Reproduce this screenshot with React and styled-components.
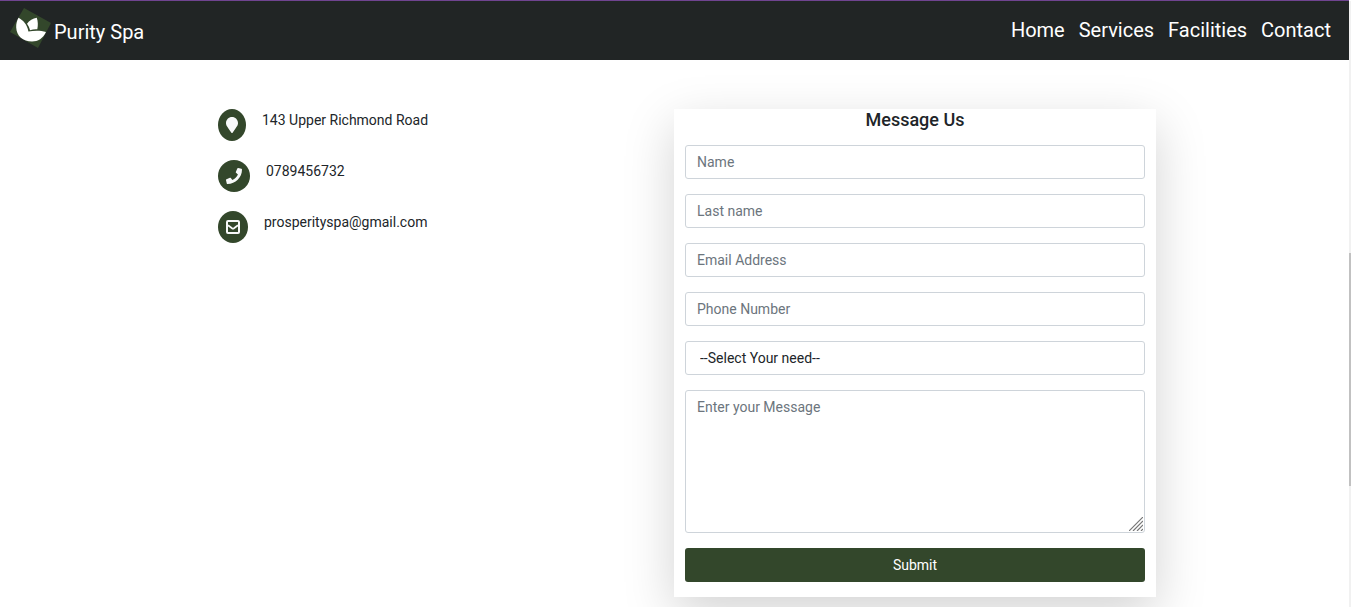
import React from "react";
import styled, { createGlobalStyle } from "styled-components";
import { FaMapMarker, FaPhone } from "react-icons/fa";

const GlobalStyle = createGlobalStyle`
  *, *::before, *::after { box-sizing: border-box; }
  body {
    margin: 0;
    background: #fff;
    color: #212529;
    font-family: Roboto, "Liberation Sans", sans-serif;
    font-size: 14px;
    line-height: 22px;
  }
`;

const Page = styled.div`
  min-height: 100vh;
  padding-right: 2px;
`;

const Navbar = styled.header`
  display: flex;
  align-items: center;
  justify-content: space-between;
  height: 60px;
  padding: 0 18px 0 10px;
  border-top: 1px solid #6f4490;
  background: #212525;
`;

const Brand = styled.a`
  display: flex;
  align-items: center;
  gap: 2px;
  color: #fff;
  font-size: 20px;
  line-height: 30px;
  text-decoration: none;

  svg { margin-bottom: 6px; }
  span { padding-top: 2px; }
`;

const NavLinks = styled.nav`
  display: flex;
  gap: 14px;
  padding-bottom: 2px;
`;

const NavLink = styled.a`
  color: #fff;
  font-size: 20px;
  line-height: 30px;
  text-decoration: none;
`;

const Main = styled.main`
  display: grid;
  grid-template-columns: 1fr 1fr;
  align-items: start;
  width: calc(100% - 32px);
  max-width: 965px;
  margin: 0 auto;
  padding: 49px 1px 9px 0;
`;

const ContactList = styled.address`
  display: flex;
  flex-direction: column;
  gap: 19px;
  padding-left: 26px;
  font-style: normal;
`;

const ContactRow = styled.div`
  display: flex;
  gap: 16px;
  font-size: 14px;
  line-height: 22px;
`;

const ContactIcon = styled.span`
  display: flex;
  align-items: center;
  justify-content: center;
  width: ${(p) => p.$width}px;
  height: 32px;
  border-radius: 50%;
  background: #33472b;
  color: #f8f9fa;
`;

const Card = styled.form`
  display: flex;
  flex-direction: column;
  gap: 15px;
  padding: 0 11px 15px;
  background: #fff;
  box-shadow: 0 16px 48px rgba(0, 0, 0, 0.175);
`;

const Title = styled.h1`
  margin: 0;
  font-size: 18px;
  font-weight: 500;
  line-height: 21px;
  text-align: center;
`;

const Field = styled.input`
  display: block;
  width: 100%;
  height: 34px;
  padding: 5px 11px;
  border: 1px solid #ced4da;
  border-radius: 3px;
  background: #fff;
  color: #212529;
  font: inherit;

  &::placeholder { color: #6c757d; opacity: 1; }
`;

const SelectField = styled(Field)`
  appearance: none;
  padding-left: 14px;
`;

const MessageBox = styled.div`
  position: relative;
`;

const MessageField = styled(Field)`
  height: 143px;
  resize: none;
`;

const Grip = styled.svg`
  position: absolute;
  right: 2px;
  bottom: 2px;
`;

const SubmitButton = styled.button`
  height: 34px;
  border: 0;
  border-radius: 3px;
  background: #33472b;
  color: #fff;
  font: inherit;
  cursor: pointer;
`;

const ScrollTrack = styled.div`
  position: fixed;
  top: 1px;
  right: 0;
  bottom: 0;
  width: 2px;
  background: #f1f1f1;
`;

const ScrollThumb = styled.div`
  height: 38.5%;
  margin-top: 252px;
  background: #c1c1c1;
`;

const Logo = () => (
  <svg width="42" height="40" viewBox="0 0 42 40" aria-hidden="true">
    <path d="M14 0 41 15 28 40 0 24Z" fill="#33472b" />
    <path
      d="M8.5 9.8C13 12 17.5 17 18.4 23.5C24 22.6 30.5 22.3 36 24C33 30.5 28 33.5 22 33.5C13 33.5 6.5 28 6.2 19.5C6.1 16 6.8 12.7 8.5 9.8Z"
      fill="#fff"
    />
    <path
      d="M26.8 9.8C23 10.3 19.2 12.5 17 15.7C18.6 18 19.6 20.2 20 22.2C22.5 21.3 25 21 27.3 21.2C28.2 17.5 28 13.5 26.8 9.8Z"
      fill="#fff"
    />
  </svg>
);

const MailIcon = () => (
  <svg width="14" height="14" viewBox="0 0 14 14" fill="none" stroke="currentColor" aria-hidden="true">
    <rect x="1" y="1" width="12" height="12" rx="1" strokeWidth="2" />
    <path d="M2 5.2 6 8.2Q7 8.9 8 8.2L12 5.2" strokeWidth="1.7" />
  </svg>
);

const links = ["Home", "Services", "Facilities", "Contact"];
const contacts = [
  { text: "143 Upper Richmond Road", width: 28, icon: <FaMapMarker size={16} /> },
  { text: "0789456732", width: 32, icon: <FaPhone size={16} /> },
  { text: "prosperityspa@gmail.com", width: 30, icon: <MailIcon /> },
];
const inputs = [
  { label: "Name", type: "text" },
  { label: "Last name", type: "text" },
  { label: "Email Address", type: "email" },
  { label: "Phone Number", type: "tel" },
];

export default function App() {
  return (
    <Page>
      <GlobalStyle />
      <Navbar>
        <Brand href="#home">
          <Logo />
          <span>Purity Spa</span>
        </Brand>
        <NavLinks>
          {links.map((l) => (
            <NavLink key={l} href={`#${l.toLowerCase()}`}>{l}</NavLink>
          ))}
        </NavLinks>
      </Navbar>
      <Main>
        <ContactList>
          {contacts.map((c) => (
            <ContactRow key={c.text}>
              <ContactIcon $width={c.width}>{c.icon}</ContactIcon>
              <span>{c.text}</span>
            </ContactRow>
          ))}
        </ContactList>
        <Card onSubmit={(e) => e.preventDefault()}>
          <Title>Message Us</Title>
          {inputs.map((f) => (
            <Field key={f.label} type={f.type} placeholder={f.label} aria-label={f.label} />
          ))}
          <SelectField as="select" aria-label="Select Your need">
            <option>--Select Your need--</option>
          </SelectField>
          <MessageBox>
            <MessageField as="textarea" placeholder="Enter your Message" aria-label="Enter your Message" />
            <Grip width="14" height="14" viewBox="0 0 14 14" stroke="#777" strokeWidth="1.2" aria-hidden="true">
              <path d="M0 14 14 0M4 14 14 4M8 14 14 8M12 14 14 12" />
            </Grip>
          </MessageBox>
          <SubmitButton type="submit">Submit</SubmitButton>
        </Card>
      </Main>
      <ScrollTrack>
        <ScrollThumb />
      </ScrollTrack>
    </Page>
  );
}
